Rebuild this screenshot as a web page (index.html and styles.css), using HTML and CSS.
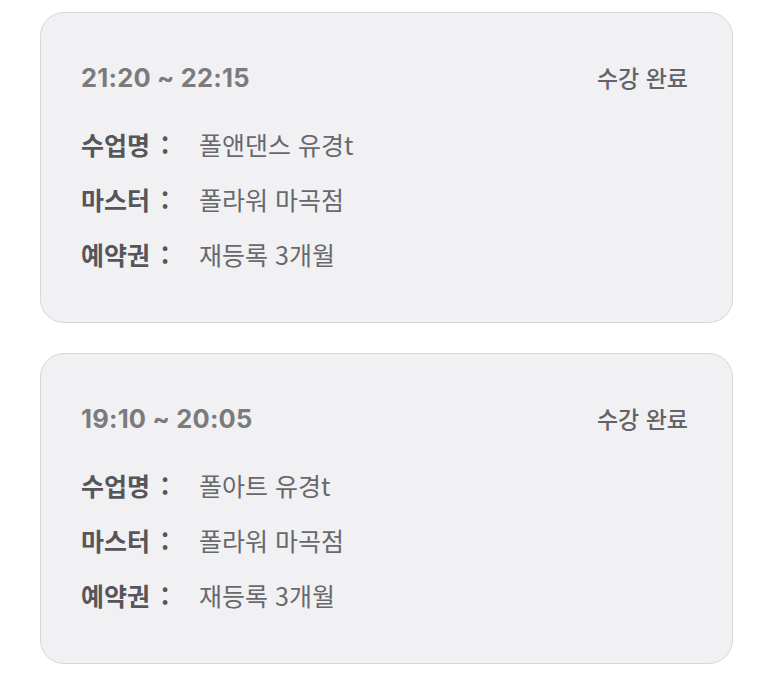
FILE: index.html
```html
<!DOCTYPE html>
<html lang="ko">
<head>
<meta charset="utf-8">
<title>수강 내역</title>
<link rel="stylesheet" href="styles.css">
</head>
<body>
<main class="history">
  <article class="lesson">
    <header class="lesson-head">
      <span class="lesson-time">21:20 ~ 22:15</span>
      <span class="lesson-status">수강 완료</span>
    </header>
    <dl class="lesson-info">
      <div class="info-row"><dt>수업명 :</dt><dd>폴앤댄스 유경t</dd></div>
      <div class="info-row"><dt>마스터 :</dt><dd>폴라워 마곡점</dd></div>
      <div class="info-row"><dt>예약권 :</dt><dd>재등록 3개월</dd></div>
    </dl>
  </article>
  <article class="lesson">
    <header class="lesson-head">
      <span class="lesson-time">19:10 ~ 20:05</span>
      <span class="lesson-status">수강 완료</span>
    </header>
    <dl class="lesson-info">
      <div class="info-row"><dt>수업명 :</dt><dd>폴아트 유경t</dd></div>
      <div class="info-row"><dt>마스터 :</dt><dd>폴라워 마곡점</dd></div>
      <div class="info-row"><dt>예약권 :</dt><dd>재등록 3개월</dd></div>
    </dl>
  </article>
</main>
</body>
</html>
```
FILE: styles.css
```css
* { box-sizing: border-box; }

html, body {
  margin: 0;
  background: #ffffff;
}

body {
  font-family: "Noto Sans CJK KR", "Noto Sans", sans-serif;
  color: #5c5c60;
}

.history {
  display: flex;
  flex-direction: column;
  gap: 30px;
  padding: 12px 40px 0 40px;
}

.lesson {
  background: #f1f1f4;
  border: 1.5px solid #d7d7da;
  border-radius: 24px;
  padding: 43px 44px 55px 40px;
  height: 311px;
}

.lesson-head {
  display: flex;
  justify-content: space-between;
  align-items: center;
  height: 42px;
}

.lesson-time {
  font-family: Inter, "Noto Sans", sans-serif;
  font-weight: 700;
  font-size: 25.5px;
  color: #7b7b7d;
  letter-spacing: 0.2px;
}

.lesson-status {
  font-size: 23px;
  font-weight: 500;
  color: #636368;
}

.lesson-info {
  margin: 29px 0 0 0;
  display: flex;
  flex-direction: column;
  gap: 21px;
}

.info-row {
  display: flex;
  align-items: center;
  height: 34px;
}

.info-row dt {
  width: 118px;
  font-size: 25px;
  font-weight: 700;
  color: #56565a;
  white-space: pre;
  word-spacing: 4px;
}

.info-row dd {
  margin: 0;
  font-size: 25px;
  font-weight: 400;
  color: #68686d;
}
```
